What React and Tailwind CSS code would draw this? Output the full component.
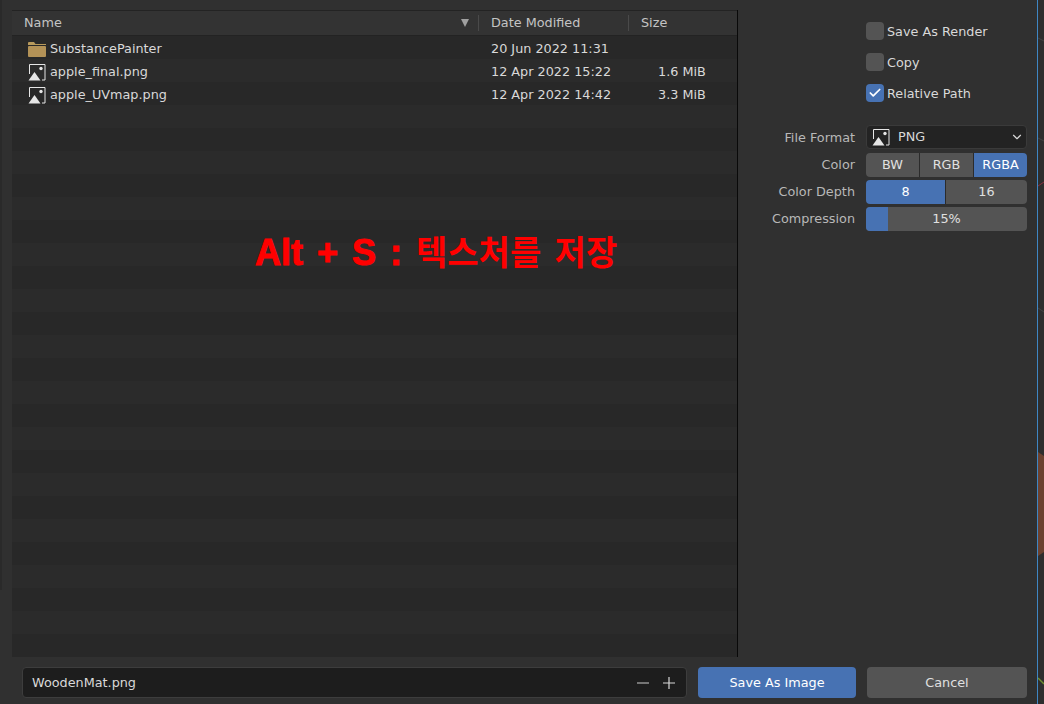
import { ChevronDown, Check } from 'lucide-react'

const font = { fontFamily: '"DejaVu Sans", sans-serif' }

const files = [
  { name: 'SubstancePainter', date: '20 Jun 2022 11:31', size: '', folder: true },
  { name: 'apple_final.png', date: '12 Apr 2022 15:22', size: '1.6 MiB' },
  { name: 'apple_UVmap.png', date: '12 Apr 2022 14:42', size: '3.3 MiB' },
]

function ImageIcon({ className }) {
  return (
    <svg viewBox="0 0 18 18" className={className} fill="none">
      <path d="M1.5 11V1.5h15.5v15.5h-3" stroke="#e6e6e6" strokeWidth="1" />
      <path d="M0.5 17.5L6.5 9l6 8.5z" fill="#e6e6e6" />
      <circle cx="13" cy="5.5" r="1.7" fill="#e6e6e6" />
    </svg>
  )
}

function FolderIcon() {
  return (
    <svg viewBox="0 0 18 16" className="w-[18px] h-[16px]">
      <path d="M0 2a1 1 0 0 1 1-1h5l1.5 2H18v1H0z" fill="#b89a5c" />
      <rect x="0" y="5" width="18" height="11" rx="1" fill="#b39257" />
    </svg>
  )
}

function CheckRow({ label, checked }) {
  return (
    <div className="flex items-center h-[18px] gap-[3px]">
      <div className={`w-[18px] h-[18px] rounded-[4px] flex items-center justify-center ${checked ? 'bg-[#4772b3]' : 'bg-[#545454]'}`}>
        {checked && <Check size={14} strokeWidth={3} className="text-white" />}
      </div>
      <span className="text-[#d9d9d9] pt-[1px]">{label}</span>
    </div>
  )
}

function FormRow({ label, children }) {
  return (
    <div className="flex items-center h-[24px]">
      <span className="w-[117px] text-right text-[#b8b8b8]">{label}</span>
      <div className="w-[161px] h-[24px] ml-[11px]">{children}</div>
    </div>
  )
}

export default function App() {
  const stripes = Array.from({ length: 27 })

  return (
    <div style={font} className="w-[1044px] h-[704px] overflow-hidden bg-[#303030] flex text-[12.8px] text-[#d9d9d9]">
      <div className="w-[2px] h-[590px] bg-[#2a2a2a] shrink-0" />
      <div className="w-[1035px] h-full flex flex-col pl-[10px] pr-[10px] pt-[10px]">
        <div className="flex flex-1 min-h-0">
          {/* file list */}
          <div className="w-[726px] h-[647px] flex flex-col overflow-hidden border-r border-black/80">
            <div className="h-[26px] shrink-0 flex items-center bg-[#333333] border-t border-[#232323] border-b border-b-[#232323] text-[#c4c4c4]">
              <span className="w-[466px] pl-[12px] flex items-center justify-between pr-[9px]">
                Name
                <span className="w-0 h-0 border-l-[4px] border-r-[4px] border-t-[8px] border-l-transparent border-r-transparent border-t-[#a0a0a0]" />
              </span>
              <span className="w-[150px] h-[16px] border-l border-[#4a4a4a] pl-[12px] flex items-center">Date Modified</span>
              <span className="h-[16px] border-l border-[#4a4a4a] pl-[12px] flex items-center">Size</span>
            </div>
            <div className="relative flex-1 bg-[#282828]">
              {stripes.map((_, i) => (
                <div key={i} className={`h-[23px] flex items-center pt-[2px] ${i % 2 === 0 ? 'bg-[#282828]' : 'bg-[#2b2b2b]'}`}>
                  {files[i] && (
                    <>
                      <span className="w-[479px] pl-[16px] flex items-center gap-[4px]">
                        <span className="w-[18px] h-[18px] flex items-center justify-center">
                          {files[i].folder ? <FolderIcon /> : <ImageIcon className="w-[18px] h-[18px]" />}
                        </span>
                        <span>{files[i].name}</span>
                      </span>
                      <span className="w-[167px]">{files[i].date}</span>
                      <span>{files[i].size}</span>
                    </>
                  )}
                </div>
              ))}
              <div
                style={{ fontFamily: '"Liberation Sans", "Noto Sans CJK KR", sans-serif' }}
                className="absolute left-[243px] top-[193px] text-[36px] leading-[48px] font-bold text-[#ff0000] whitespace-nowrap [word-spacing:4px]"
              >
                <span className="[-webkit-text-stroke:1px_#ff0000]">Alt + S :</span> <span className="text-[34px]">텍스처를 저장</span>
              </div>
            </div>
          </div>

          {/* options */}
          <div className="flex-1 flex flex-col">
            <div className="flex flex-col gap-[13px] pt-[12px] pl-[128px]">
              <CheckRow label="Save As Render" />
              <CheckRow label="Copy" />
              <CheckRow label="Relative Path" checked />
            </div>
            <div className="flex flex-col mt-[23px]">
              <div className="mb-[4px]">
                <FormRow label={<span className="block pt-[1px]">File Format</span>}>
                  <div className="h-full bg-[#232323] border border-[#3a3a3a] rounded-[4px] flex items-center pl-[5px] pr-[2px]">
                    <ImageIcon className="w-[18px] h-[18px]" />
                    <span className="flex-1 pl-[8px]">PNG</span>
                    <ChevronDown size={14} strokeWidth={2} className="text-[#d9d9d9]" />
                  </div>
                </FormRow>
              </div>
              <div className="flex flex-col gap-[3px]">
                <FormRow label="Color">
                  <div className="h-full flex gap-[1px] rounded-[4px] overflow-hidden text-[#e0e0e0] bg-[#2b2b2b]">
                    <span className="flex-1 bg-[#545454] flex items-center justify-center">BW</span>
                    <span className="flex-1 bg-[#545454] flex items-center justify-center">RGB</span>
                    <span className="flex-1 bg-[#4772b3] flex items-center justify-center text-white">RGBA</span>
                  </div>
                </FormRow>
                <FormRow label="Color Depth">
                  <div className="h-full flex gap-[1px] rounded-[4px] overflow-hidden text-[#e0e0e0] bg-[#2b2b2b]">
                    <span className="w-[79px] bg-[#4772b3] flex items-center justify-center text-white">8</span>
                    <span className="flex-1 bg-[#545454] flex items-center justify-center">16</span>
                  </div>
                </FormRow>
                <FormRow label="Compression">
                  <div className="relative h-full rounded-[4px] overflow-hidden bg-[#545454] flex items-center justify-center text-[#e0e0e0]">
                    <div className="absolute left-0 top-0 bottom-0 w-[22px] bg-[#4772b3]" />
                    <span className="relative">15%</span>
                  </div>
                </FormRow>
              </div>
            </div>
          </div>
        </div>

        {/* bottom bar */}
        <div className="h-[47px] shrink-0 flex items-start pt-[10px] pl-[10px]">
          <div className="w-[665px] h-[31px] bg-[#1d1d1d] border border-[#3d3d3d] rounded-[4px] flex items-center pl-[9px] pr-[11px]">
            <span className="flex-1">WoodenMat.png</span>
            <svg viewBox="0 0 12 12" className="w-[12px] h-[12px] mr-[14px]" stroke="#b0b0b0" strokeWidth="1.2">
              <path d="M0 6h12" />
            </svg>
            <svg viewBox="0 0 12 12" className="w-[12px] h-[12px]" stroke="#d8d8d8" strokeWidth="1.2">
              <path d="M0 6h12M6 0v12" />
            </svg>
          </div>
          <div className="w-[158px] h-[31px] ml-[11px] bg-[#4772b3] rounded-[4px] flex items-center justify-center text-white">Save As Image</div>
          <div className="w-[160px] h-[31px] ml-[11px] bg-[#545454] rounded-[4px] flex items-center justify-center text-[#e0e0e0]">Cancel</div>
        </div>
      </div>
      <div className="w-[7px] h-full border-l border-[#3f86c4] bg-[#2e2e2e]">
        <svg viewBox="0 0 6 704" className="w-[6px] h-[704px]">
          <path d="M0 186L6 182" stroke="#8a3040" strokeWidth="1" />
          <path d="M0 38L6 41M0 138L6 141M0 308L6 312" stroke="#444444" strokeWidth="1" />
          <path d="M0 452L6 456V552L0 556z" fill="#6b4230" />
          <path d="M0 678L6 684" stroke="#6f8f2f" strokeWidth="1.5" />
        </svg>
      </div>
    </div>
  )
}
